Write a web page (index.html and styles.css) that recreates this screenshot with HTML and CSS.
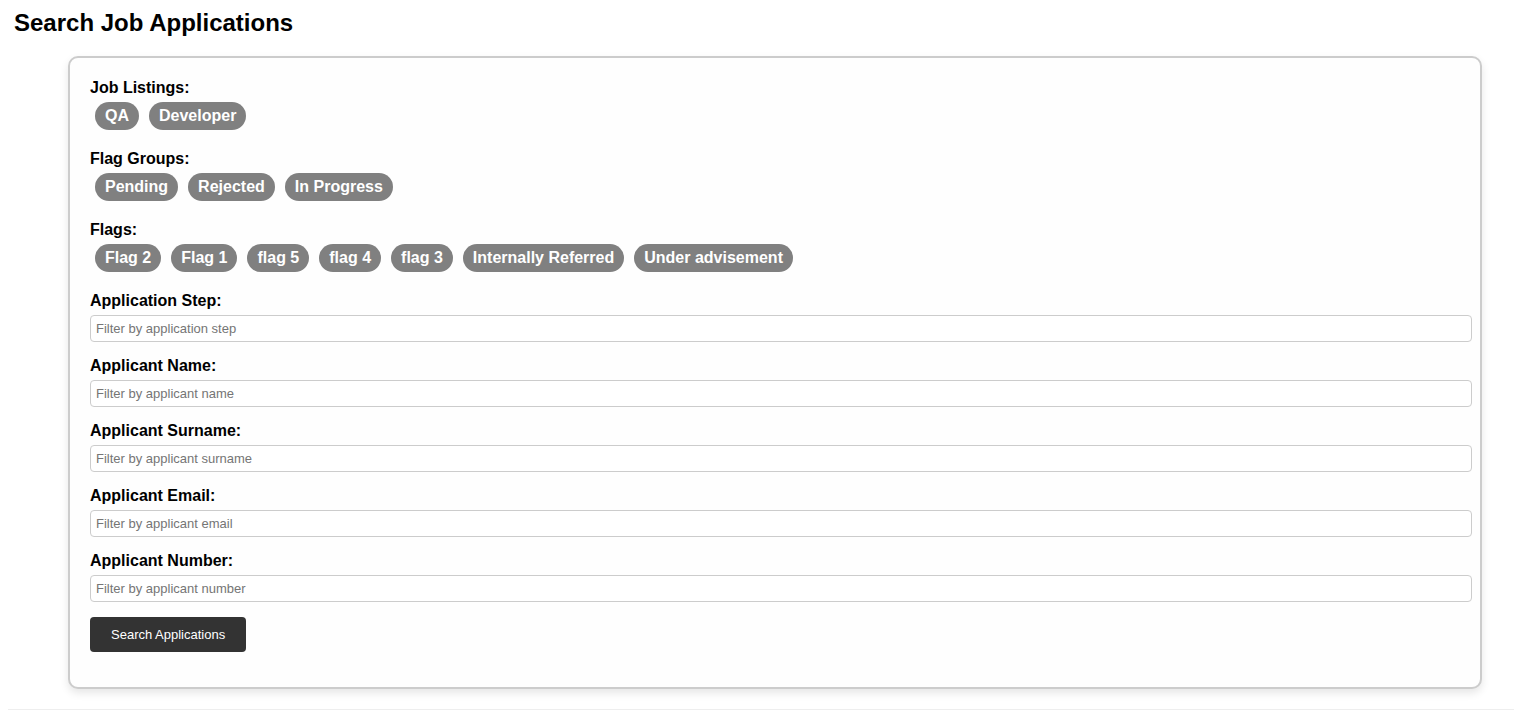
FILE: index.html
```html
<!DOCTYPE html>
<html lang="en">
<head>
    <meta charset="UTF-8">
    <title>Search Job Applications</title>
    <link rel="stylesheet" href="styles.css">
</head>
<body>
<h1 class="title">Search Job Applications</h1>
<div class="card">
    <div class="section">
        <label class="label">Job Listings:</label>
        <div class="chips">
            <span class="chip">QA</span>
            <span class="chip">Developer</span>
        </div>
    </div>
    <div class="section">
        <label class="label">Flag Groups:</label>
        <div class="chips">
            <span class="chip">Pending</span>
            <span class="chip">Rejected</span>
            <span class="chip">In Progress</span>
        </div>
    </div>
    <div class="section">
        <label class="label">Flags:</label>
        <div class="chips">
            <span class="chip">Flag 2</span>
            <span class="chip">Flag 1</span>
            <span class="chip">flag 5</span>
            <span class="chip">flag 4</span>
            <span class="chip">flag 3</span>
            <span class="chip">Internally Referred</span>
            <span class="chip">Under advisement</span>
        </div>
    </div>
    <div class="field">
        <label class="label">Application Step:</label>
        <input type="text" placeholder="Filter by application step">
    </div>
    <div class="field">
        <label class="label">Applicant Name:</label>
        <input type="text" placeholder="Filter by applicant name">
    </div>
    <div class="field">
        <label class="label">Applicant Surname:</label>
        <input type="text" placeholder="Filter by applicant surname">
    </div>
    <div class="field">
        <label class="label">Applicant Email:</label>
        <input type="text" placeholder="Filter by applicant email">
    </div>
    <div class="field">
        <label class="label">Applicant Number:</label>
        <input type="text" placeholder="Filter by applicant number">
    </div>
    <button class="btn">Search Applications</button>
</div>
<div class="results"></div>
</body>
</html>
```

FILE: styles.css
```css
body {
    margin: 0;
    padding: 0 8px;
    font-family: "Liberation Sans", Arial, sans-serif;
    color: #000;
    background: #fff;
}

.title {
    margin: 0;
    padding: 9px 6px 0;
    font-size: 24px;
    line-height: 28px;
    font-weight: bold;
}

.card {
    margin: 19px 32px 0 60px;
    padding: 21px 20px 35px;
    border: 2px solid #ccc;
    border-radius: 10px;
    background: #fefefe;
    box-shadow: 0 4px 8px rgba(0, 0, 0, 0.1);
}

.label {
    display: block;
    font-size: 16px;
    font-weight: bold;
    line-height: 18px;
    margin-bottom: 5px;
}

.section {
    margin-bottom: 20px;
}

.section + .field {
    margin-top: 1px;
}

.chips {
    display: flex;
    flex-wrap: wrap;
    gap: 10px;
    padding-left: 5px;
}

.chip {
    display: inline-block;
    padding: 5px 10px;
    font-size: 16px;
    line-height: 18px;
    font-weight: bold;
    color: #fff;
    background: #808080;
    border-radius: 14px;
}

.field {
    margin-bottom: 15px;
}

.field input {
    display: block;
    width: 100%;
    margin: 0;
    padding: 5px;
    font-family: "Liberation Sans", Arial, sans-serif;
    font-size: 13px;
    line-height: 15px;
    border: 1px solid #ccc;
    border-radius: 4px;
    background: #fff;
    outline: none;
}

.field input::placeholder {
    color: #757575;
}

.btn {
    padding: 10px 21px;
    font-family: "Liberation Sans", Arial, sans-serif;
    font-size: 13px;
    line-height: 15px;
    color: #fff;
    background: #333;
    border: none;
    border-radius: 4px;
    cursor: pointer;
}

.results {
    margin-top: 20px;
    border-top: 1px solid #eee;
    height: 10px;
}
```
